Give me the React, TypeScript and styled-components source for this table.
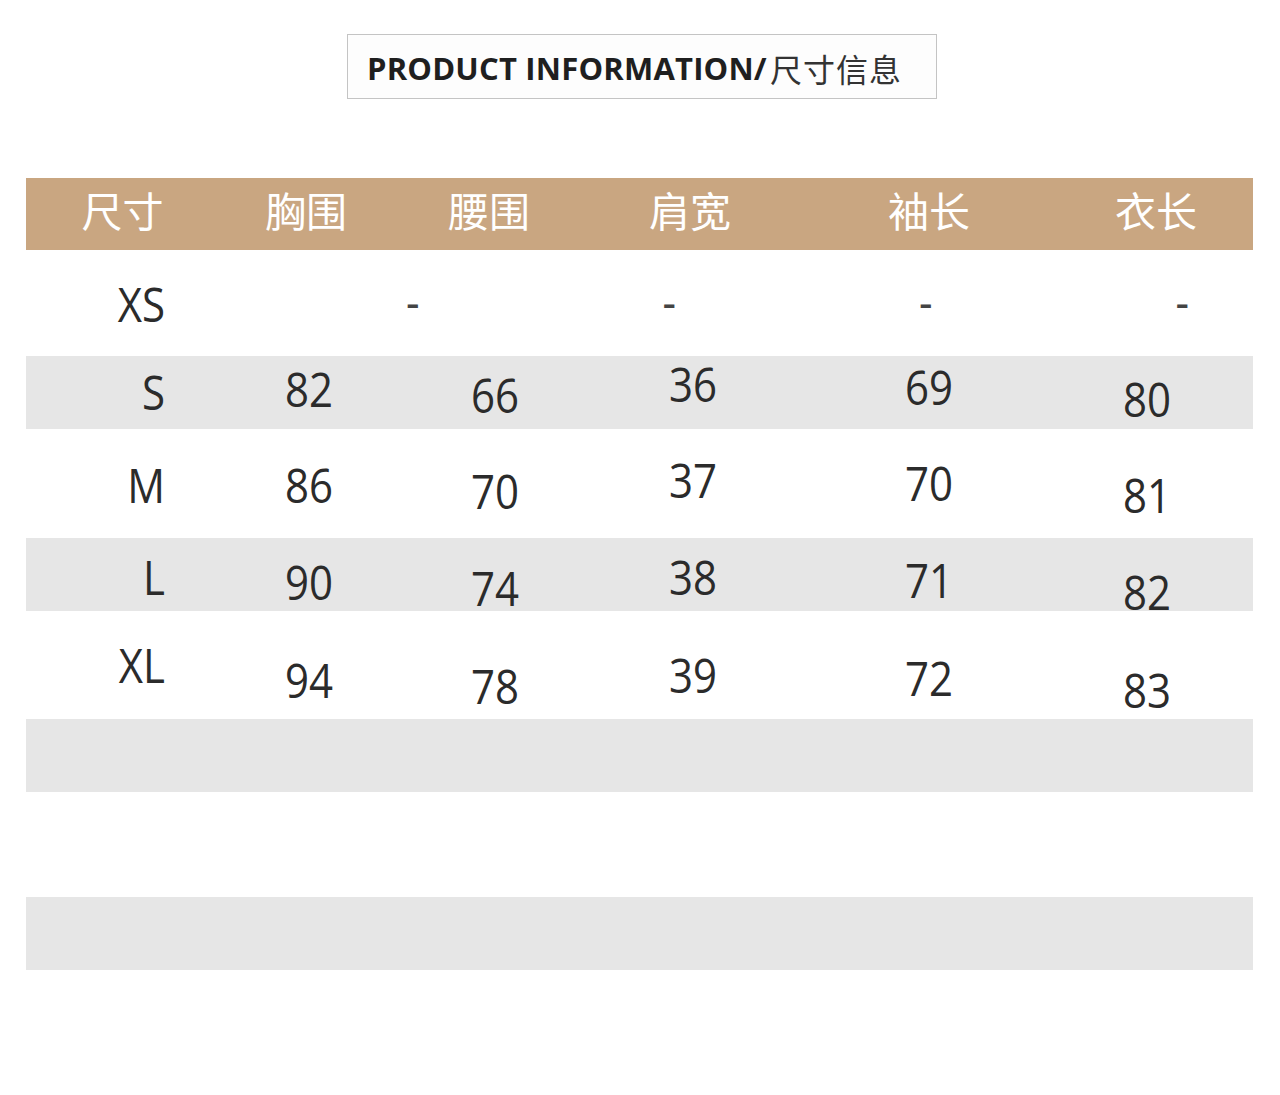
import styled, { createGlobalStyle } from "styled-components";

const GlobalStyle = createGlobalStyle`
  body {
    margin: 0;
    background: #ffffff;
    font-family: "Open Sans", "Noto Sans CJK SC", sans-serif;
    color: #2b2b2b;
  }
`;

// ink top of digits sits a few px below the box top at this size
const INK = 4;
const HEAD_COLS = "193px 174px 192px 210px 268px 186px";
const BODY_COLS = "196px 176px 220px 252px 198px";
const COL_SHIFT = [0, 6, -5, -2, 10];

interface SizeRow {
  size: string;
  height: number;
  shade: boolean;
  labelTop: number;
  base: number;
  values: string[];
}

const rows: SizeRow[] = [
  { size: "S", height: 73, shade: true, labelTop: 19, base: 16, values: ["82", "66", "36", "69", "80"] },
  { size: "M", height: 109, shade: false, labelTop: 39, base: 39, values: ["86", "70", "37", "70", "81"] },
  { size: "L", height: 73, shade: true, labelTop: 22, base: 27, values: ["90", "74", "38", "71", "82"] },
  { size: "XL", height: 108, shade: false, labelTop: 37, base: 52, values: ["94", "78", "39", "72", "83"] },
];

const Page = styled.div`
  width: 1280px;
  min-height: 1095px;
  padding-top: 34px;
  box-sizing: border-box;
`;

const TitleBox = styled.div`
  margin-left: 347px;
  width: 590px;
  height: 65px;
  box-sizing: border-box;
  border: 1px solid #c4c4c4;
  background: #fdfdfd;
  display: flex;
  align-items: center;
  padding: 2px 0 0 19px;
  font-size: 31px;
  font-weight: 700;
  letter-spacing: 0.2px;
  color: #1f1f1f;
  white-space: nowrap;
  span {
    font-family: "Noto Sans CJK SC", sans-serif;
    font-weight: 400;
    font-size: 32px;
    color: #333;
    letter-spacing: 1px;
    margin-left: 3px;
  }
`;

const Table = styled.div`
  margin: 79px 26px 0;
  width: 1227px;
`;

const HeadRow = styled.div`
  display: grid;
  grid-template-columns: ${HEAD_COLS};
  height: 72px;
  background: #c9a681;
  align-items: center;
`;

const HeadCell = styled.div`
  text-align: center;
  font-family: "Noto Sans CJK SC", sans-serif;
  font-size: 41px;
  font-weight: 400;
  color: #ffffff;
  line-height: 1;
  margin-top: -9px;
`;

const Band = styled.div<{ $h: number; $shade: boolean }>`
  display: flex;
  height: ${(p) => p.$h}px;
  background: ${(p) => (p.$shade ? "#e6e6e6" : "#ffffff")};
`;

const Text = styled.div`
  font-size: 42px;
  line-height: 42px;
  height: 42px;
  transform: scaleY(1.12);
`;

const SizeCell = styled(Text)<{ $top: number }>`
  width: 185px;
  box-sizing: border-box;
  padding-right: 46px;
  text-align: right;
  margin-top: ${(p) => p.$top - INK}px;
`;

const Values = styled.div`
  display: grid;
  grid-template-columns: ${BODY_COLS};
  align-items: start;
`;

const ValueCell = styled(Text)<{ $top: number; $last: boolean }>`
  text-align: center;
  padding-right: ${(p) => (p.$last ? 14 : 0)}px;
  margin-top: ${(p) => p.$top - INK}px;
`;

const Dashes = styled.div`
  display: flex;
  gap: 243px;
  padding-left: 195px;
  margin-top: 30px;
`;

const Dash = styled(Text)`
  color: #444;
`;

export default function App() {
  return (
    <Page>
      <GlobalStyle />
      <TitleBox>
        PRODUCT INFORMATION/<span>尺寸信息</span>
      </TitleBox>
      <Table>
        <HeadRow>
          {["尺寸", "胸围", "腰围", "肩宽", "袖长", "衣长"].map((h) => (
            <HeadCell key={h}>{h}</HeadCell>
          ))}
        </HeadRow>
        <Band $h={106} $shade={false}>
          <SizeCell $top={37}>XS</SizeCell>
          <Dashes>
            {[0, 1, 2, 3].map((i) => (
              <Dash key={i}>-</Dash>
            ))}
          </Dashes>
        </Band>
        {rows.map((r) => (
          <Band key={r.size} $h={r.height} $shade={r.shade}>
            <SizeCell $top={r.labelTop}>{r.size}</SizeCell>
            <Values>
              {r.values.map((v, i) => (
                <ValueCell key={i} $top={r.base + COL_SHIFT[i]} $last={i === 4}>
                  {v}
                </ValueCell>
              ))}
            </Values>
          </Band>
        ))}
        <Band $h={73} $shade={true} />
        <Band $h={105} $shade={false} />
        <Band $h={73} $shade={true} />
      </Table>
    </Page>
  );
}
